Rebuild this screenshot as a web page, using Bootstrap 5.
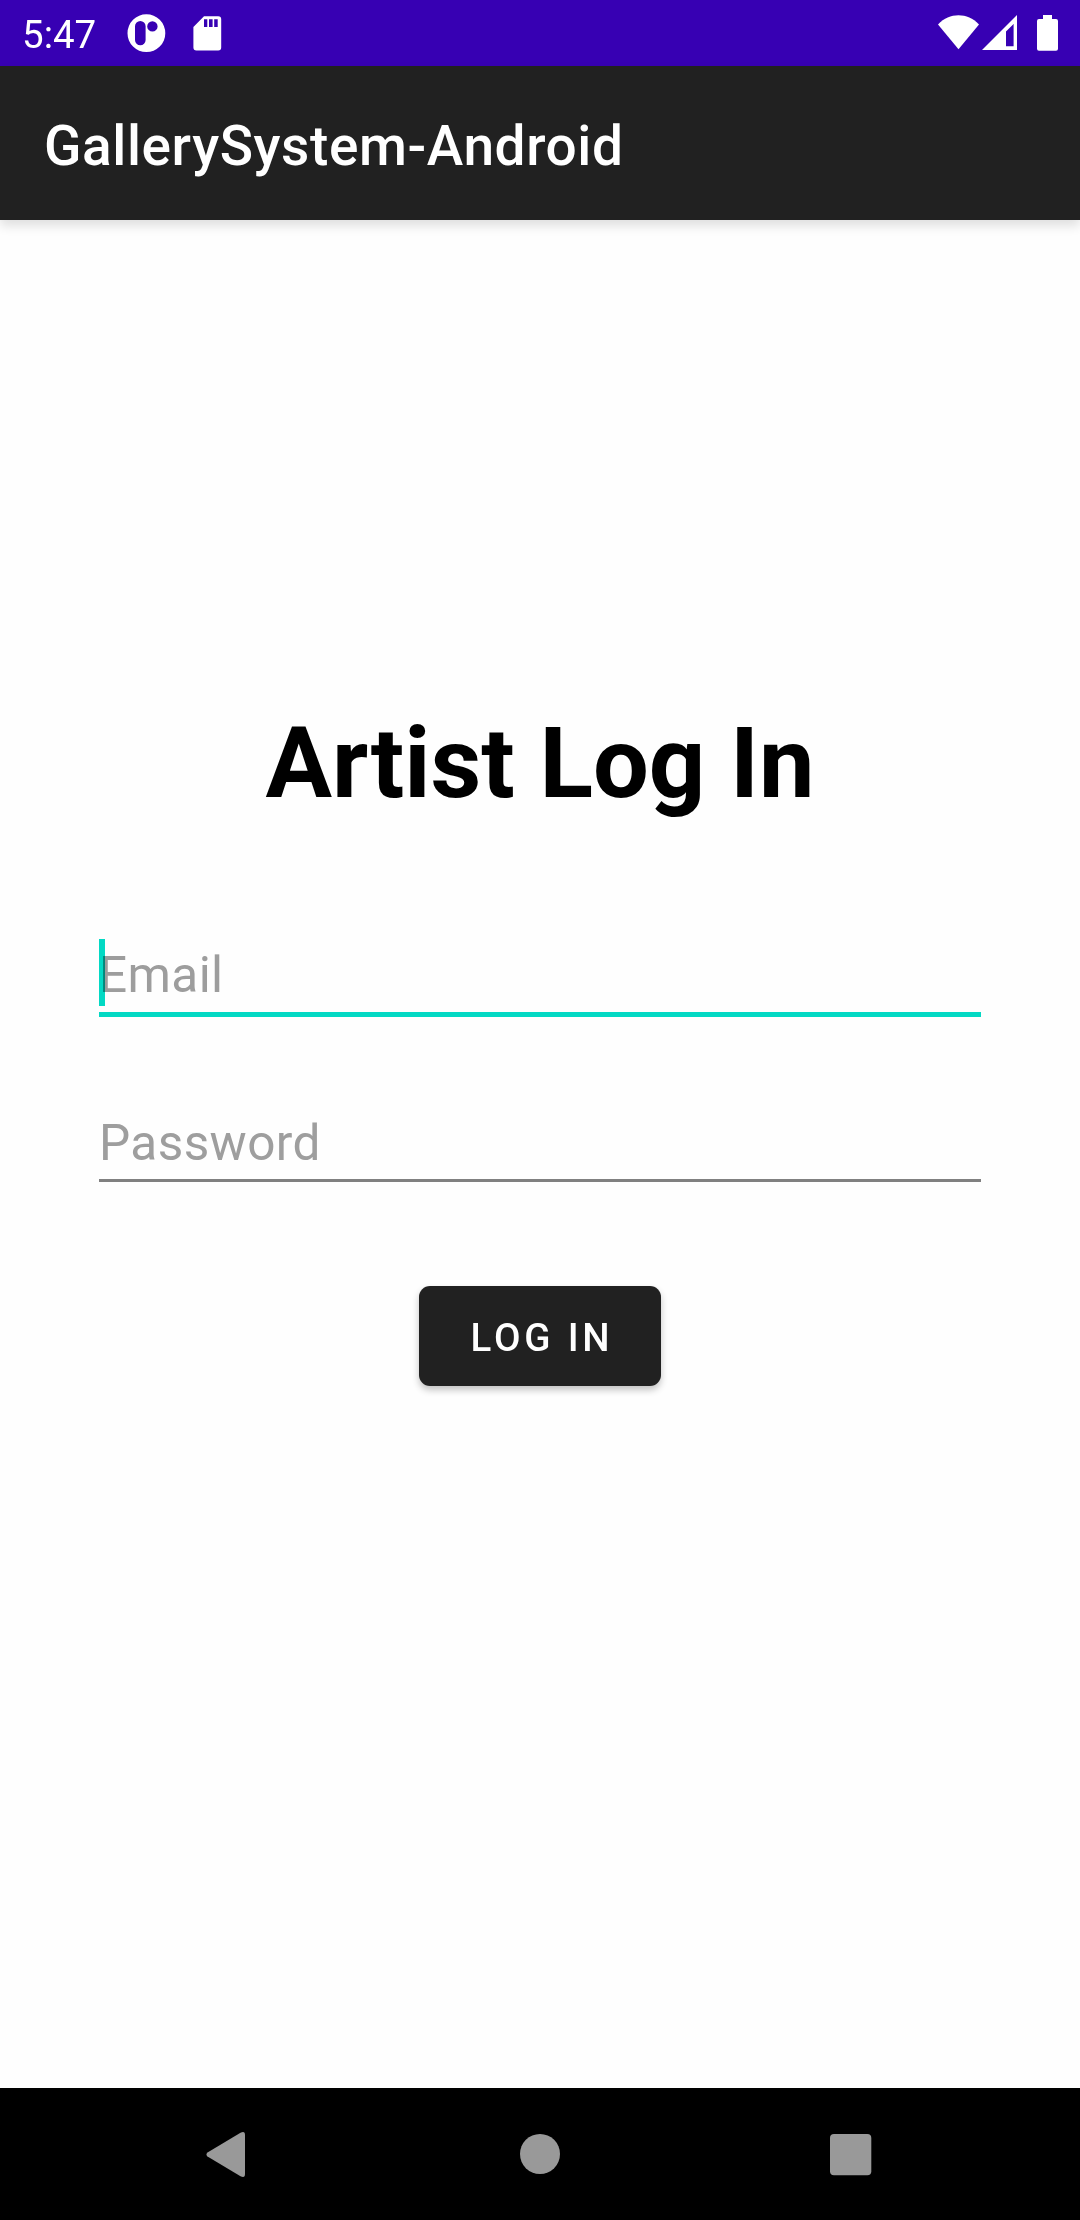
<!DOCTYPE html>
<html lang="en">
<head>
<meta charset="utf-8">
<meta name="viewport" content="width=device-width, initial-scale=1">
<title>GallerySystem-Android</title>
<link href="https://cdn.jsdelivr.net/npm/bootstrap@5.3.0/dist/css/bootstrap.min.css" rel="stylesheet">
<style>
  body { font-family: Roboto, "Liberation Sans", sans-serif; height: 2220px; background: #fefefe; overflow: hidden; }
  svg { display: block; }
  .status-bar { height: 66px; background: #3700b3; }
  .clock { font-size: 38.5px; line-height: 66px; padding: 2px 0 0 22px; width: 127px; height: 66px; }
  .app-bar { height: 154px; background: #212121; padding: 6px 44px 0; box-shadow: 0 6px 10px rgba(0,0,0,.12); }
  .app-title { font-size: 55px; font-weight: 500; line-height: 1.2; letter-spacing: .6px; }
  .login-form { padding: 485px 99px 0; }
  .login-heading { font-size: 99px; line-height: 116px; font-weight: 700; margin-bottom: 118px; color: #000; }
  .field { border: 0; border-radius: 0; padding: 0; height: 78px; font-size: 49.5px; line-height: 72px; letter-spacing: .4px; background: transparent; }
  .field::placeholder { color: #9e9e9e; opacity: 1; }
  .field-wrap { mix-blend-mode: multiply; height: 78px; }
  .field-active { border-bottom: 5.5px solid #03dac5; padding-bottom: .5px; }
  .field-idle { height: 75px; border-bottom: 3px solid #808080; }
  .field-idle, .field-active { box-shadow: none; }
  .gap-fields { margin-bottom: 90px; }
  .caret { left: 0; top: 0; width: 6px; height: 67px; background: #03dac5; mix-blend-mode: multiply; }
  .login-btn { width: 242px; height: 100px; margin-top: 104px; padding: 3px 0 0 4px; border: 0; border-radius: 11px; background: #212121; font-size: 38.5px; font-weight: 500; letter-spacing: 3.8px; box-shadow: 0 4px 7px rgba(0,0,0,.24); }
  .nav-keys { height: 132px; background: #000; }
</style>
</head>
<body class="d-flex flex-column">
  <header>
    <div class="status-bar d-flex text-white">
      <div class="clock">5:47</div>
      <svg width="39" height="66" viewBox="127 0 39 66"><path fill="#fff" fill-rule="evenodd" d="M146.4 14.3a18.9 18.9 0 1 0 0 37.8a18.9 18.9 0 1 0 0-37.8zM135 26.3a5.3 5.3 0 0 1 10.6 0V40a5.3 5.3 0 0 1-10.6 0zM152.4 21.2a5.2 5.2 0 1 1 0 10.4a5.2 5.2 0 1 1 0-10.4z"/></svg>
      <svg class="ms-4" width="36" height="66" viewBox="190 0 36 66"><path fill="#fff" fill-rule="evenodd" d="M204 16.3h14.2a3 3 0 0 1 3 3V47.6a3 3 0 0 1-3 3H196.400a3 3 0 0 1-3-3V26.900zM204 19.300v7.600h3.300v-7.600zM209 19.300v7.600h3.600v-7.600zM214.200 19.300v7.600h3.500v-7.600z"/></svg>
      <svg class="ms-auto" width="145" height="66" viewBox="935 0 145 66" fill="#fff">
        <path d="M938 24.500C944 18 951 15.200 958.500 15.200S973 18 979 24.500L958.500 49.300z"/>
        <path fill-rule="evenodd" d="M1017 15V50H982zM1013.600 24L1006 31.500V46.300H1013.600z"/>
        <path d="M1043 15h9v4h4a2 2 0 0 1 2 2v27.700a2 2 0 0 1-2 2h-17a2 2 0 0 1-2-2V21a2 2 0 0 1 2-2h4z"/>
      </svg>
    </div>
    <div class="app-bar d-flex align-items-center text-white"><div class="app-title">GallerySystem-Android</div></div>
  </header>
  <main class="flex-grow-1">
    <form class="login-form text-center">
      <h1 class="login-heading">Artist Log In</h1>
      <div class="field-wrap position-relative gap-fields">
        <input type="email" class="field field-active form-control" placeholder="Email" aria-label="Email">
        <span class="caret position-absolute"></span>
      </div>
      <input type="password" class="field field-idle form-control" placeholder="Password" aria-label="Password">
      <button type="button" class="login-btn btn btn-dark">LOG IN</button>
    </form>
  </main>
  <nav class="nav-keys" aria-label="System navigation">
    <svg width="1080" height="132" viewBox="0 2088 1080 132" fill="#999">
      <path d="M207.500 2152.500L240.500 2132.800Q245 2130.500 245 2135V2174Q245 2178.500 240.500 2176.200L207.500 2156.500Q205.300 2154.500 207.500 2152.500z"/>
      <circle cx="540" cy="2154" r="20"/>
      <rect x="830" y="2134" width="41.300" height="41.300" rx="4"/>
    </svg>
  </nav>
<script src="https://cdn.jsdelivr.net/npm/bootstrap@5.3.0/dist/js/bootstrap.bundle.min.js"></script>
</body>
</html>
